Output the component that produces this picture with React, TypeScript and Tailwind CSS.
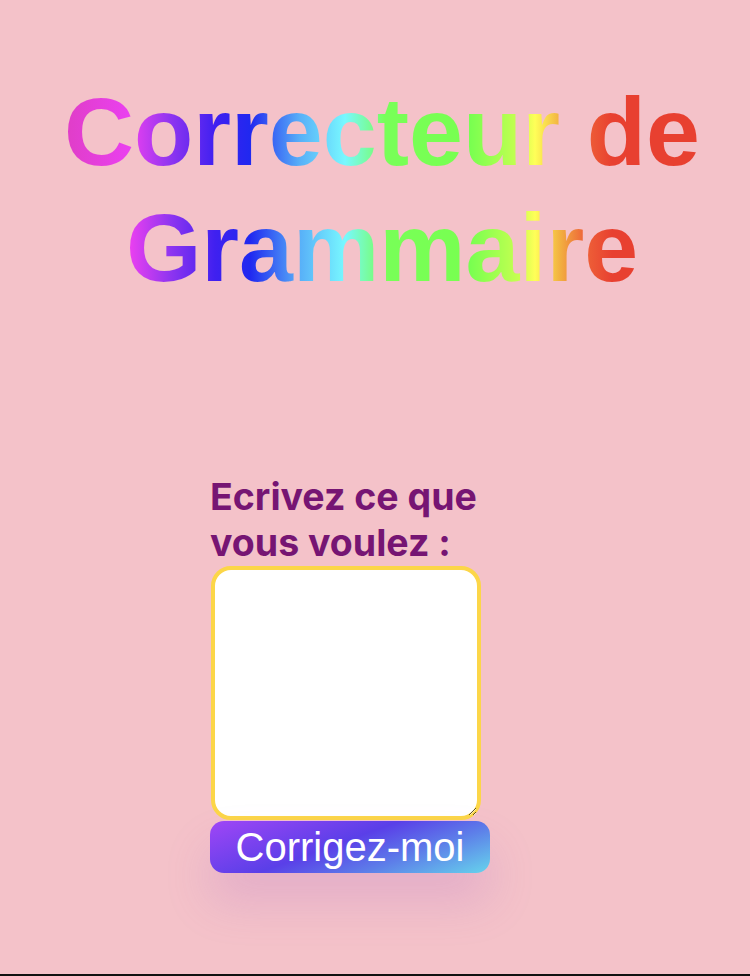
export default function App() {
  return (
    <div className="flex min-h-screen flex-col bg-[#f4c2c9]">
      <main className="flex-1">
        {/* Title */}
        <h1 className="mt-[74px] bg-[linear-gradient(90deg,#e03ec8_67px,#ea40f0_130px,#9035f0_170px,#4020f0_215px,#2028f0_250px,#58b0f8_300px,#78f8ff_345px,#78ff58_385px,#78ff50_470px,#c8ff50_520px,#ffff58_535px,#f2b040_560px,#ee6238_585px,#e84030_612px,#e84030_750px)] bg-clip-text pl-[14px] text-center font-['Liberation_Sans',Arial,sans-serif] text-[97px] font-bold leading-[116px] text-transparent">
          Correcteur de Grammaire
        </h1>

        {/* Form */}
        <form className="ml-[210px] mt-[168px] flex w-[280px] flex-col items-start">
          <label
            htmlFor="texte"
            className="w-[276px] font-['Inter',sans-serif] text-[37.5px] font-bold leading-[46px] text-[#761573]"
          >
            Ecrivez ce que vous voulez :
          </label>
          <textarea
            id="texte"
            className="ml-px h-[254px] w-[270px] rounded-[20px] border-4 border-[#fcd648] bg-white p-2 outline-none"
          />
          <button
            type="button"
            className="mt-px h-[52px] w-[280px] rounded-[14px] bg-[linear-gradient(160deg,#a046f6_0%,#5a3fe8_45%,#5d7fe9_70%,#66d4ec_100%)] font-['Liberation_Sans',Arial,sans-serif] text-[40px] leading-[46px] text-white shadow-[0_28px_45px_rgba(170,100,200,0.22)]"
          >
            Corrigez-moi
          </button>
        </form>
      </main>
      <div className="h-[2px] bg-[#111111]" />
    </div>
  )
}
